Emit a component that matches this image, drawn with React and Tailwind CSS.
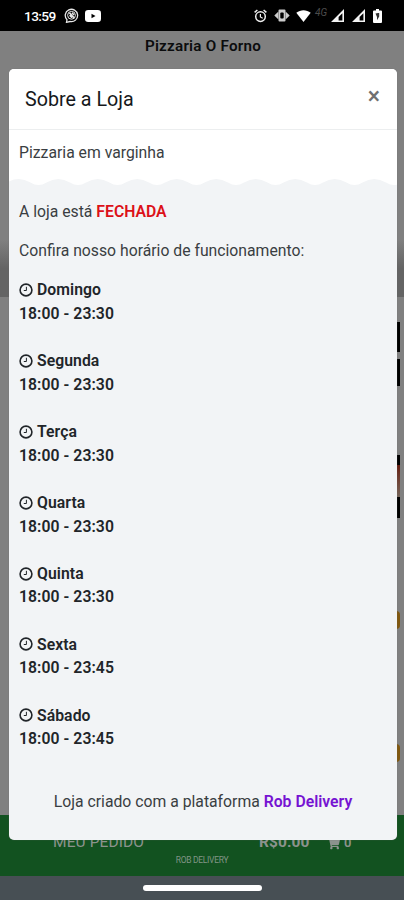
import React from "react";
import { FaShoppingCart } from "react-icons/fa";

const hours = [
  ["Domingo", "18:00 - 23:30"],
  ["Segunda", "18:00 - 23:30"],
  ["Terça", "18:00 - 23:30"],
  ["Quarta", "18:00 - 23:30"],
  ["Quinta", "18:00 - 23:30"],
  ["Sexta", "18:00 - 23:45"],
  ["Sábado", "18:00 - 23:45"],
];

function Clock() {
  return (
    <svg className="h-[14px] w-[14px] shrink-0" viewBox="0 0 14 14" fill="none" stroke="#212529">
      <circle cx="7" cy="7" r="5.9" strokeWidth="1.6" />
      <path d="M7.4 3.8v3.7H4.8" strokeWidth="1" />
    </svg>
  );
}

function Signal() {
  return (
    <svg className="h-[13px] w-[13px]" viewBox="0 0 13 13">
      <path fillRule="evenodd" fill="#f4f4f4" d="M13 0v13H0zM11.4 4.2 7.600 8v3.400h3.800z" />
    </svg>
  );
}

function StatusBar() {
  return (
    <div className="flex h-[31px] items-center bg-black pl-[24px] pr-[22px] text-white">
      <span className="mt-[3px] w-[32px] whitespace-nowrap text-[13.7px] font-medium leading-none tracking-[-0.6px]">13:59</span>
      <svg className="ml-[8px] h-[15px] w-[15px]" viewBox="0 0 15 15" fill="none" stroke="#e8e8e8">
        <path d="M3 11.8A6.2 6.2 0 1 1 6 13.5l-3.5.8z" strokeWidth="1.3" />
        <circle cx="7.5" cy="7.3" r="3.9" strokeWidth="1" />
        <path d="m5.4 4.8 4.6 5M5.6 7.2l2.5 2.6M8 4.8l2 2.2" strokeWidth="1.6" />
      </svg>
      <svg className="ml-[6px] h-[12px] w-[16px]" viewBox="0 0 16 12">
        <rect width="16" height="12" rx="3.2" fill="#fff" />
        <path d="m6.5 3.7 4 2.3-4 2.3z" fill="#000" />
      </svg>
      <div className="ml-auto flex items-center">
        <svg className="h-[14px] w-[13px]" viewBox="0 0 13 14" fill="none" stroke="#eee">
          <circle cx="6.5" cy="7.6" r="4.8" strokeWidth="1.5" />
          <path d="M.6 3.4 3.4 1M12.4 3.4 9.6 1" strokeWidth="1.5" />
          <path d="M6.4 5v3l2.3 1.3" strokeWidth="1.2" />
        </svg>
        <svg className="ml-[7px] h-[13px] w-[16px]" viewBox="0 0 16 13" fill="#ccc">
          <path d="M4.500 1.500Q4.500.5 5.500.5h5q1 0 1 1v10q0 1-1 1h-5q-1 0-1-1zM4.200 2.800v7.400L.3 6.500zM11.800 2.800v7.400l3.900-3.700z" />
          <rect x="6.300" y="3.600" width="3.400" height="5.800" rx="1" fill="#000" />
        </svg>
        <svg className="ml-[6px] h-[12px] w-[15px]" viewBox="0 0 15 12">
          <path d="M.3 2.8C4.5-.7 10.5-.7 14.7 2.8L7.5 12z" fill="#fff" />
        </svg>
        <span className="ml-[4px] mt-[-5px] w-[14px] text-[10px] italic leading-none text-[#4c4c4c]">4G</span>
        <span className="ml-[2px]"><Signal /></span>
        <span className="ml-[8px]"><Signal /></span>
        <svg className="ml-[8px] h-[14px] w-[9px]" viewBox="0 0 9 14">
          <path d="M3 0h3v1.5h2q1 0 1 1V13q0 1-1 1H1q-1 0-1-1V2.500q0-1 1-1h2z" fill="#fff" />
          <path d="M5.1 4 2.500 4.500 4 8v3.200l2.200-3.700V4z" fill="#333" />
        </svg>
      </div>
    </div>
  );
}

function Page() {
  return (
    <div className="flex h-[900px] flex-col bg-[#808080]">
      <StatusBar />
      <div className="h-[209px] pt-[4px] text-center text-[15.2px] font-semibold leading-[23px] tracking-[0.25px] text-[#0b0c0d]">
        <span className="relative left-[1px]">Pizzaria O Forno</span>
      </div>
      <div className="h-[57px] bg-gradient-to-b from-[#808080] to-[#646464] to-50%" />
      <div className="flex flex-1 flex-col items-end pr-[4px] pt-[25px]">
        <div className="h-[30px] w-[4px] bg-black" />
        <div className="mt-[7px] h-[27px] w-[4px] bg-black" />
        <div className="mt-[69px] h-[10px] w-[4px] bg-black" />
        <div className="h-[32px] w-[4px] bg-gradient-to-b from-[#641c10] to-[#75655a]" />
        <div className="h-[21px] w-[4px] bg-black" />
        <div className="mt-[93px] h-[18px] w-[4px] rounded-r bg-[#805810]" />
        <div className="mt-[115px] h-[18px] w-[4px] rounded-r bg-[#805810]" />
      </div>
      <div className="h-[61px] bg-[#125220] text-[#8c928d]">
        <div className="flex h-[36px] items-center pl-[53px] pt-[20px] text-[15.5px]">
          <span className="w-[206px] tracking-[0.1px]">MEU PEDIDO</span>
          <span className="w-[68px] font-bold tracking-[0.1px]">R$0.00</span>
          <FaShoppingCart className="h-[13px] w-[13px]" />
          <span className="ml-[4px] text-[13px] font-semibold">0</span>
        </div>
        <div className="pt-[4px] text-center text-[8.5px] leading-[10px] tracking-[-0.3px] text-[#819587]">ROB DELIVERY</div>
      </div>
      <div className="flex h-[24px] items-center justify-center bg-[#474f54]">
        <div className="h-[6px] w-[119px] rounded-full bg-white" />
      </div>
    </div>
  );
}

function Scallops() {
  const starts = [-10, 29.5, 69, 108.5, 148, 187.5, 227, 266.5, 306, 345.5, 385];
  const d = starts.map((x) => `M${x} 8V6Q${x + 4} 6 ${x + 8} 3.500Q${x + 19.75}-3.500 ${x + 31.5} 3.500Q${x + 35.5} 6 ${x + 39.5} 6V8z`).join("");
  return (
    <svg className="block h-[8px] w-full bg-white" viewBox="0 0 388 8">
      <path d={d} fill="#f2f4f6" />
    </svg>
  );
}

export default function App() {
  return (
    <div className="relative h-[900px] w-[404px] overflow-hidden font-['Roboto',sans-serif]">
      <Page />
      <div className="absolute left-[9px] top-[69px] flex h-[771px] w-[388px] flex-col overflow-hidden rounded-[5px] bg-[#f2f4f6] text-[15.75px] leading-[23.63px] text-[#3a3e42] shadow-[0_0_1px_0px_#696969]">
        <div className="flex h-[61px] items-center justify-between border-b border-[#eceeef] bg-white pl-[16px] pr-[17px]">
          <h1 className="mt-[1px] text-[19.7px] text-[#16181b]">Sobre a Loja</h1>
          <span className="mt-[-6px] text-[23px] font-medium leading-none text-[#707070]">×</span>
        </div>
        <div className="h-[49px] bg-white pl-[10px] pt-[11px]">Pizzaria em varginha</div>
        <Scallops />
        <div className="px-[10px] pt-[12.500px]">
          <p>A loja está <b className="font-semibold text-[#dc1018]">FECHADA</b></p>
          <p className="mt-[15.75px]">Confira nosso horário de funcionamento:</p>
          <div className="mt-[15.75px] flex flex-col gap-[23.63px] font-semibold tracking-[0.06px] text-[#212529]">
            {hours.map(([day, time]) => (
              <div key={day}>
                <div className="flex items-center gap-[4px]"><Clock />{day}</div>
                <div>{time}</div>
              </div>
            ))}
          </div>
          <p className="mt-[39.5px] text-center">Loja criado com a plataforma <b className="font-semibold text-[#7613d2]">Rob Delivery</b></p>
        </div>
      </div>
    </div>
  );
}
